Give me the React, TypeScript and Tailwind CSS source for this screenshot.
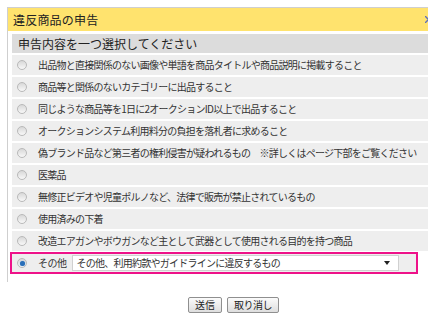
import React from "react";

const items = [
  "出品物と直接関係のない画像や単語を商品タイトルや商品説明に掲載すること",
  "商品等と関係のないカテゴリーに出品すること",
  "同じような商品等を1日に2オークションID以上で出品すること",
  "オークションシステム利用料分の負担を落札者に求めること",
  "偽ブランド品など第三者の権利侵害が疑われるもの　※詳しくはページ下部をご覧ください",
  "医薬品",
  "無修正ビデオや児童ポルノなど、法律で販売が禁止されているもの",
  "使用済みの下着",
  "改造エアガンやボウガンなど主として武器として使用される目的を持つ商品",
];

function Radio({ checked }: { checked?: boolean }) {
  return (
    <span className="w-[10px] h-[10px] rounded-full border border-[#b9b9b9] bg-gradient-to-b from-[#d8d8d8] to-[#f8f8f8] flex items-center justify-center shrink-0">
      {checked && <span className="w-[5px] h-[5px] rounded-full bg-[#2a6fb8] shadow-[0_0_1px_#5a9ae0]" />}
    </span>
  );
}

export default function App() {
  return (
    <div
      className="w-[428px] h-[319px] bg-white overflow-hidden text-[#333]"
      style={{ fontFamily: '"Noto Sans CJK JP", "Noto Sans", sans-serif' }}
    >
      <div className="pt-[7px] pl-[7px]">
        <div className="border-l border-t border-[#cfcfcf] w-[440px]">
          <div className="h-[23px] bg-[#ffe36e] flex items-center pl-[5px] relative">
            <span className="text-[12px] leading-none text-[#222] tracking-[0.2px]">違反商品の申告</span>
            <svg className="absolute left-[417px] top-[8px]" width="7" height="7" viewBox="0 0 7 7">
              <path d="M0 0 L7 7 M7 0 L0 7" stroke="#6070b8" strokeWidth="1.4" />
            </svg>
          </div>
          <div className="pl-[4px] pt-[3px] flex flex-col">
            <div className="h-[19px] bg-[#dcdcdc] flex items-center pl-[6px]">
              <span className="text-[12px] leading-none text-[#222]">申告内容を一つ選択してください</span>
            </div>
            <div className="flex flex-col gap-[2px] pt-[2px]">
              {items.map((t) => (
                <div key={t} className="h-[20px] bg-[#eeeeee] flex items-center pl-[5px] gap-[11px]">
                  <Radio />
                  <span className="text-[10px] leading-none whitespace-nowrap tracking-[-0.75px]">{t}</span>
                </div>
              ))}
            </div>
            <div className="w-[408px] -ml-[2px] mt-[1px] border-2 border-[#ee1289] h-[22px] flex items-center">
              <div className="h-[18px] w-full bg-[#eeeeee] flex items-center pl-[5px]">
                <Radio checked />
                <span className="text-[10px] leading-none whitespace-nowrap ml-[11px] tracking-[-0.5px]">その他</span>
                <div className="ml-[5px] w-[327px] h-[16px] bg-white border border-[#d0d0d0] flex items-center justify-between pl-[4px] pr-[8px]">
                  <span className="text-[10px] leading-none whitespace-nowrap tracking-[-0.75px]">その他、利用約款やガイドラインに違反するもの</span>
                  <span className="w-0 h-0 border-l-[3px] border-r-[3px] border-t-[4px] border-l-transparent border-r-transparent border-t-[#222]" />
                </div>
              </div>
            </div>
          </div>
        </div>
        <div className="h-[10px] w-px bg-[#cfcfcf] -mt-[2px]" />
      </div>
      <div className="flex gap-[5px] pl-[188px] mt-[15px]">
        <button className="h-[16px] px-[6px] border border-[#8f8f8f] rounded-[2px] bg-gradient-to-b from-[#fbfbfb] to-[#dedede] text-[10px] leading-none text-[#222] flex items-center">
          送信
        </button>
        <button className="h-[16px] px-[6px] border border-[#8f8f8f] rounded-[2px] bg-gradient-to-b from-[#fbfbfb] to-[#dedede] text-[10px] leading-none text-[#222] flex items-center tracking-[-0.5px]">
          取り消し
        </button>
      </div>
    </div>
  );
}
